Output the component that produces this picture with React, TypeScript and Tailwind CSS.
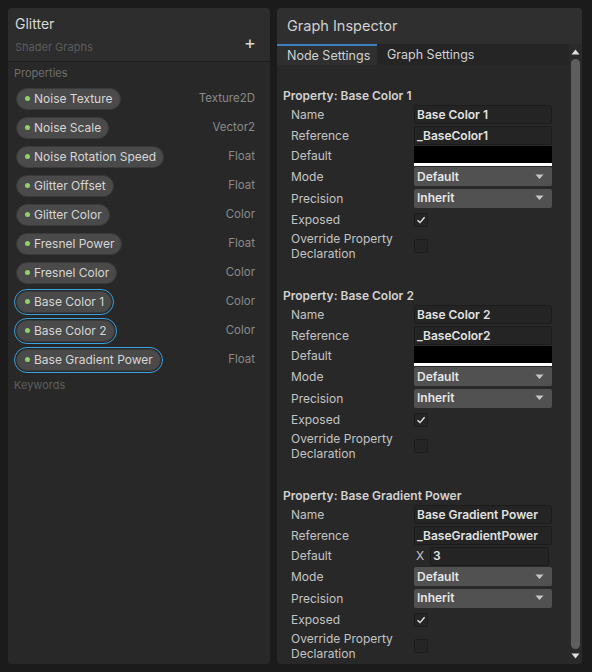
import React from "react";

const props: { name: string; type: string; sel?: boolean }[] = [
  { name: "Noise Texture", type: "Texture2D" },
  { name: "Noise Scale", type: "Vector2" },
  { name: "Noise Rotation Speed", type: "Float" },
  { name: "Glitter Offset", type: "Float" },
  { name: "Glitter Color", type: "Color" },
  { name: "Fresnel Power", type: "Float" },
  { name: "Fresnel Color", type: "Color" },
  { name: "Base Color 1", type: "Color", sel: true },
  { name: "Base Color 2", type: "Color", sel: true },
  { name: "Base Gradient Power", type: "Float", sel: true },
];

function Pill({ name, sel }: { name: string; sel?: boolean }) {
  return (
    <div
      className={
        sel
          ? "rounded-full border border-[#36a3e0] p-px -ml-[2px]"
          : "rounded-full"
      }
    >
      <div className="flex h-[22px] items-center gap-[4px] rounded-full border border-[#3a3a3a] bg-[#4a4a4a] pl-[8px] pr-[7px]">
        <span className="h-[5px] w-[5px] rounded-full bg-[#8fd16a]" />
        <span className="text-[12px] leading-none text-[#d6d6d6]">{name}</span>
      </div>
    </div>
  );
}

function Label({ children }: { children: React.ReactNode }) {
  return <div className="w-[123px] shrink-0 text-[12px] leading-[15px] text-[#c4c4c4]">{children}</div>;
}

function Row({ label, children }: { label: string; children: React.ReactNode }) {
  return (
    <div className="flex h-[21px] items-center">
      <Label>{label}</Label>
      <div className="w-[138px]">{children}</div>
    </div>
  );
}

function TextField({ value }: { value: string }) {
  return (
    <div className="flex h-[19px] items-center rounded-[2px] border border-[#1c1c1c] bg-[#242424] px-[2px] text-[12px] font-semibold text-[#e2e2e2]">
      {value}
    </div>
  );
}

function Dropdown({ value }: { value: string }) {
  return (
    <div className="flex h-[19px] items-center justify-between rounded-[2px] bg-[#515151] pl-[3px] pr-[8px] text-[12px] font-semibold text-[#e6e6e6]">
      <span>{value}</span>
      <svg width="9" height="6" viewBox="0 0 9 6">
        <path d="M0.5 0.5 L8.5 0.5 L4.5 5 Z" fill="#c8c8c8" />
      </svg>
    </div>
  );
}

function Checkbox({ checked }: { checked?: boolean }) {
  return (
    <div className="flex h-[14px] w-[14px] items-center justify-center rounded-[2px] border border-[#1c1c1c] bg-[#252525]">
      {checked && (
        <svg width="10" height="10" viewBox="0 0 10 10">
          <path d="M1.5 5.2 L4 7.6 L8.6 2.2" stroke="#e8e8e8" strokeWidth="1.4" fill="none" />
        </svg>
      )}
    </div>
  );
}

function Section({
  title,
  name,
  reference,
  float,
  first,
}: {
  title: string;
  name: string;
  reference: string;
  float?: boolean;
  first?: boolean;
}) {
  return (
    <div className={first ? "mt-[23px]" : "mt-[26px]"}>
      <div className="h-[16px] pl-[6px] text-[12px] font-semibold leading-[16px] text-[#d2d2d2]">{title}</div>
      <div className="pl-[14px]">
        <Row label="Name">
          <TextField value={name} />
        </Row>
        <Row label="Reference">
          <TextField value={reference} />
        </Row>
        <div className="flex h-[20px] items-center">
          <div className="-mt-[2px]">
            <Label>Default</Label>
          </div>
          <div className="w-[138px]">
            {float ? (
              <div className="flex items-center">
                <span className="w-[16px] pl-[2px] text-[12px] text-[#c4c4c4]">X</span>
                <div className="flex h-[19px] w-[119px] items-center rounded-[2px] border border-[#1c1c1c] bg-[#242424] px-[2px] text-[12px] font-semibold text-[#e2e2e2]">
                  3
                </div>
              </div>
            ) : (
              <div className="flex h-[20px] flex-col">
                <div className="flex-1 bg-black" />
                <div className="h-[3px] bg-white" />
              </div>
            )}
          </div>
        </div>
        <Row label="Mode">
          <Dropdown value="Default" />
        </Row>
        <div className="flex h-[22px] items-center">
          <Label>Precision</Label>
          <div className="w-[138px]">
            <Dropdown value="Inherit" />
          </div>
        </div>
        <Row label="Exposed">
          <Checkbox checked />
        </Row>
        <div className="flex h-[32px] items-center">
          <Label>
            Override Property
            <br />
            Declaration
          </Label>
          <Checkbox />
        </div>
      </div>
    </div>
  );
}

export default function App() {
  return (
    <div
      className="flex h-[672px] w-[592px] gap-[7px] bg-[#1b1b1b] p-[8px]"
      style={{ fontFamily: "Inter, 'Noto Sans', sans-serif" }}
    >
      {/* Left panel */}
      <div className="flex w-[262px] flex-col overflow-hidden rounded-[4px] bg-[#282828]">
        <div className="relative h-[54px] border-b border-[#1d1d1d] bg-[#2d2d2d] px-[7px]">
          <div className="pt-[7px] text-[14px] leading-[18px] text-[#d8d8d8]">Glitter</div>
          <div className="pt-[7px] text-[11px] leading-[14px] text-[#5c5c5c]">Shader Graphs</div>
          <div className="absolute right-[14px] top-[26px] text-[18px] leading-none text-[#d8d8d8]">+</div>
        </div>
        <div className="flex h-[21px] items-center px-[6px] pt-[1px] text-[11px] text-[#6e6e6e]">Properties</div>
        <div className="flex flex-col pt-[1px]">
          {props.map((p) => (
            <div key={p.name} className="flex h-[29px] items-center justify-between pl-[8px] pr-[15px]">
              <Pill name={p.name} sel={p.sel} />
              <span className="text-[11.5px] text-[#8a8a8a]">{p.type}</span>
            </div>
          ))}
        </div>
        <div className="flex h-[22px] items-center px-[6px] text-[11px] text-[#5e5e5e]">Keywords</div>
      </div>

      {/* Right panel */}
      <div className="flex w-[305px] flex-col overflow-hidden rounded-[4px] bg-[#282828]">
        <div className="flex h-[36px] items-center bg-[#2f2f2f] px-[10px] text-[14.5px] text-[#cfcfcf]">
          Graph Inspector
        </div>
        <div className="flex min-h-0 flex-1">
          <div className="flex min-w-0 flex-1 flex-col">
            <div className="flex h-[21px] bg-[#252525]">
              <div className="flex w-[100px] items-center border-t-2 border-[#3d7ec0] bg-[#2f2f2f] pl-[10px] pt-[1px] text-[12.5px] text-[#d2d2d2]">
                Node Settings
              </div>
              <div className="flex items-center pl-[10px] pt-[1px] text-[12.5px] text-[#d2d2d2]">Graph Settings</div>
            </div>
            <div className="flex-1">
              <Section first title="Property: Base Color 1" name="Base Color 1" reference="_BaseColor1" />
              <Section title="Property: Base Color 2" name="Base Color 2" reference="_BaseColor2" />
              <Section
                title="Property: Base Gradient Power"
                name="Base Gradient Power"
                reference="_BaseGradientPower"
                float
              />
            </div>
          </div>
          {/* Scrollbar */}
          <div className="flex w-[13px] flex-col items-center bg-[#2a2a2a] py-[4px]">
            <svg width="9" height="6" viewBox="0 0 9 6" className="mt-[1px]">
              <path d="M4.5 0.5 L8.5 5.5 L0.5 5.5 Z" fill="#e0e0e0" />
            </svg>
            <div className="my-[4px] w-[9px] flex-1 rounded-full bg-[#5e5e5e]" />
            <svg width="9" height="6" viewBox="0 0 9 6" className="mb-[1px]">
              <path d="M0.5 0.5 L8.5 0.5 L4.5 5.5 Z" fill="#e0e0e0" />
            </svg>
          </div>
        </div>
      </div>
    </div>
  );
}
